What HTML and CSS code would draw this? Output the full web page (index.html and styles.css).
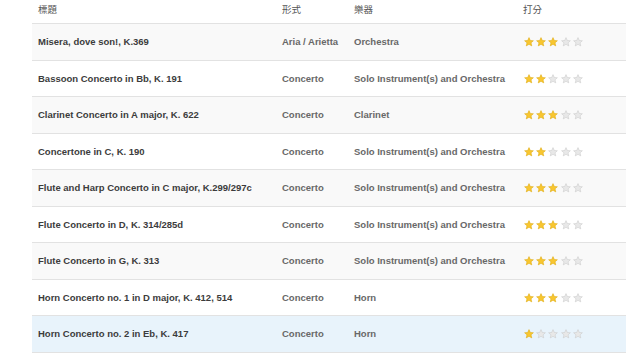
FILE: index.html
```html
<!DOCTYPE html>
<html>
<head>
<meta charset="utf-8">
<link rel="stylesheet" href="styles.css">
</head>
<body>
<svg width="0" height="0" class="defs">
  <defs>
    <symbol id="star" viewBox="0 0 20 20">
      <path d="M10 1.2 L12.6 6.9 L18.8 7.5 L14.1 11.6 L15.5 17.8 L10 14.6 L4.5 17.8 L5.9 11.6 L1.2 7.5 L7.4 6.9 Z"/>
    </symbol>
  </defs>
</svg>
<table class="works">
  <colgroup>
    <col class="c-title"><col class="c-form"><col class="c-inst"><col class="c-rate">
  </colgroup>
  <thead>
    <tr><th>標題</th><th>形式</th><th>樂器</th><th>打分</th></tr>
  </thead>
  <tbody>
    <tr><td class="title">Misera, dove son!, K.369</td><td class="meta">Aria / Arietta</td><td class="meta">Orchestra</td><td><span class="stars" data-n="3"></span></td></tr>
    <tr><td class="title">Bassoon Concerto in Bb, K. 191</td><td class="meta">Concerto</td><td class="meta">Solo Instrument(s) and Orchestra</td><td><span class="stars" data-n="2"></span></td></tr>
    <tr><td class="title">Clarinet Concerto in A major, K. 622</td><td class="meta">Concerto</td><td class="meta">Clarinet</td><td><span class="stars" data-n="3"></span></td></tr>
    <tr><td class="title">Concertone in C, K. 190</td><td class="meta">Concerto</td><td class="meta">Solo Instrument(s) and Orchestra</td><td><span class="stars" data-n="2"></span></td></tr>
    <tr><td class="title">Flute and Harp Concerto in C major, K.299/297c</td><td class="meta">Concerto</td><td class="meta">Solo Instrument(s) and Orchestra</td><td><span class="stars" data-n="3"></span></td></tr>
    <tr><td class="title">Flute Concerto in D, K. 314/285d</td><td class="meta">Concerto</td><td class="meta">Solo Instrument(s) and Orchestra</td><td><span class="stars" data-n="3"></span></td></tr>
    <tr><td class="title">Flute Concerto in G, K. 313</td><td class="meta">Concerto</td><td class="meta">Solo Instrument(s) and Orchestra</td><td><span class="stars" data-n="3"></span></td></tr>
    <tr><td class="title">Horn Concerto no. 1 in D major, K. 412, 514</td><td class="meta">Concerto</td><td class="meta">Horn</td><td><span class="stars" data-n="3"></span></td></tr>
    <tr class="hover"><td class="title">Horn Concerto no. 2 in Eb, K. 417</td><td class="meta">Concerto</td><td class="meta">Horn</td><td><span class="stars" data-n="1"></span></td></tr>
  </tbody>
</table>
<script>
document.querySelectorAll('.stars').forEach(function (el) {
  var n = +el.getAttribute('data-n');
  var html = '';
  for (var i = 0; i < 5; i++) {
    html += '<svg class="star ' + (i < n ? 'on' : 'off') + '" width="10" height="10"><use href="#star"/></svg>';
  }
  el.innerHTML = html;
});
</script>
</body>
</html>
```

FILE: styles.css
```css
html, body {
  margin: 0;
  padding: 0;
  background: #fff;
}
body {
  font-family: "Liberation Sans", Arial, "Noto Sans CJK TC", sans-serif;
  padding: 0 14px 0 32px;
}
.defs {
  position: absolute;
}
.works {
  width: 594px;
  border-collapse: collapse;
  table-layout: fixed;
}
.c-title { width: 244px; }
.c-form { width: 72px; }
.c-inst { width: 169px; }
.works th {
  text-align: left;
  font-weight: normal;
  font-size: 9.5px;
  color: #555;
  padding: 3px 6px 7px;
  line-height: 13px;
  border-bottom: 1px solid #e2e2e2;
  font-family: "Liberation Sans", "Noto Sans CJK TC", sans-serif;
}
.works td {
  font-size: 9.5px;
  font-weight: bold;
  line-height: 12.5px;
  padding: 12px 6px 11px;
  border-bottom: 1px solid #e2e2e2;
  white-space: nowrap;
  overflow: hidden;
}
.works tbody tr:nth-child(odd) td {
  background: #f9f9f9;
}
.works tbody tr.hover td {
  background: #e8f3fb;
}
.title {
  color: #3c3c3c;
}
.meta {
  color: #686868;
}
.stars {
  display: inline-flex;
  gap: 2.2px;
  vertical-align: middle;
  padding-left: 1px;
}
.star {
  display: block;
}
.star.on {
  fill: #f8c630;
  stroke: #dba400;
  stroke-width: 1;
}
.star.off {
  fill: #e8e8e8;
  stroke: #c6c6c6;
  stroke-width: 1;
}
```
